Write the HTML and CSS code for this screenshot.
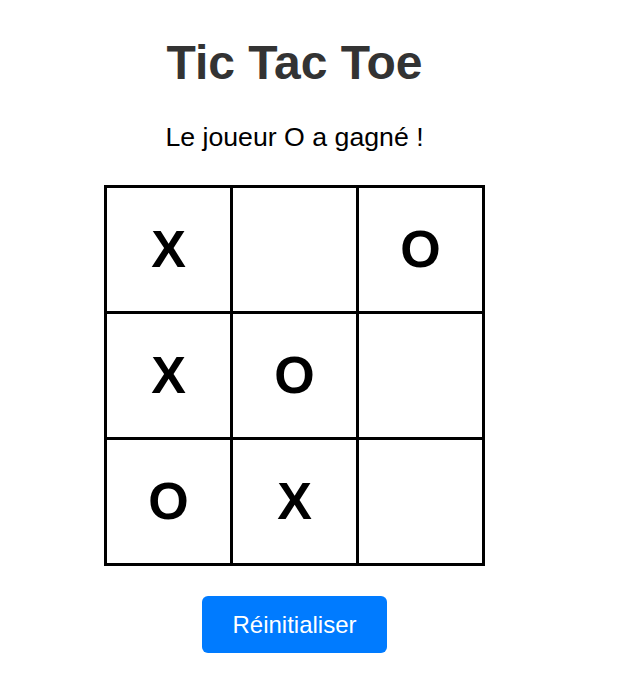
FILE: index.html
```html
<!DOCTYPE html>
<html lang="fr">
<head>
<meta charset="utf-8">
<title>Tic Tac Toe</title>
<link rel="stylesheet" href="styles.css">
</head>
<body>
<main class="game">
  <h1 class="title">Tic Tac Toe</h1>
  <p class="status">Le joueur O a gagné !</p>
  <div class="board">
    <div class="cell">X</div>
    <div class="cell"></div>
    <div class="cell">O</div>
    <div class="cell">X</div>
    <div class="cell">O</div>
    <div class="cell"></div>
    <div class="cell">O</div>
    <div class="cell">X</div>
    <div class="cell"></div>
  </div>
  <button class="reset" type="button">Réinitialiser</button>
</main>
</body>
</html>
```

FILE: styles.css
```css
html, body {
  margin: 0;
  padding: 0;
  background: #fff;
}

body {
  font-family: "Liberation Sans", Arial, sans-serif;
}

.game {
  width: 589px;
  display: flex;
  flex-direction: column;
  align-items: center;
  text-align: center;
}

.title {
  margin: 35px 0 0;
  font-size: 48px;
  line-height: 1.15;
  font-weight: bold;
  color: #333;
}

.status {
  margin: 32px 0 0;
  font-size: 26.7px;
  line-height: 1.15;
  color: #000;
}

.board {
  margin-top: 32px;
  display: grid;
  grid-template-columns: repeat(3, 123px);
  grid-template-rows: repeat(3, 123px);
  gap: 3px;
  padding: 3px;
  background: #000;
}

.cell {
  background: #fff;
  display: flex;
  align-items: center;
  justify-content: center;
  font-size: 52px;
  font-weight: bold;
  color: #000;
}

.reset {
  margin-top: 30px;
  padding: 15px 30px;
  font-family: "Liberation Sans", Arial, sans-serif;
  font-size: 24px;
  line-height: 1.15;
  color: #fff;
  background: #007bff;
  border: none;
  border-radius: 6px;
  cursor: pointer;
}
```
